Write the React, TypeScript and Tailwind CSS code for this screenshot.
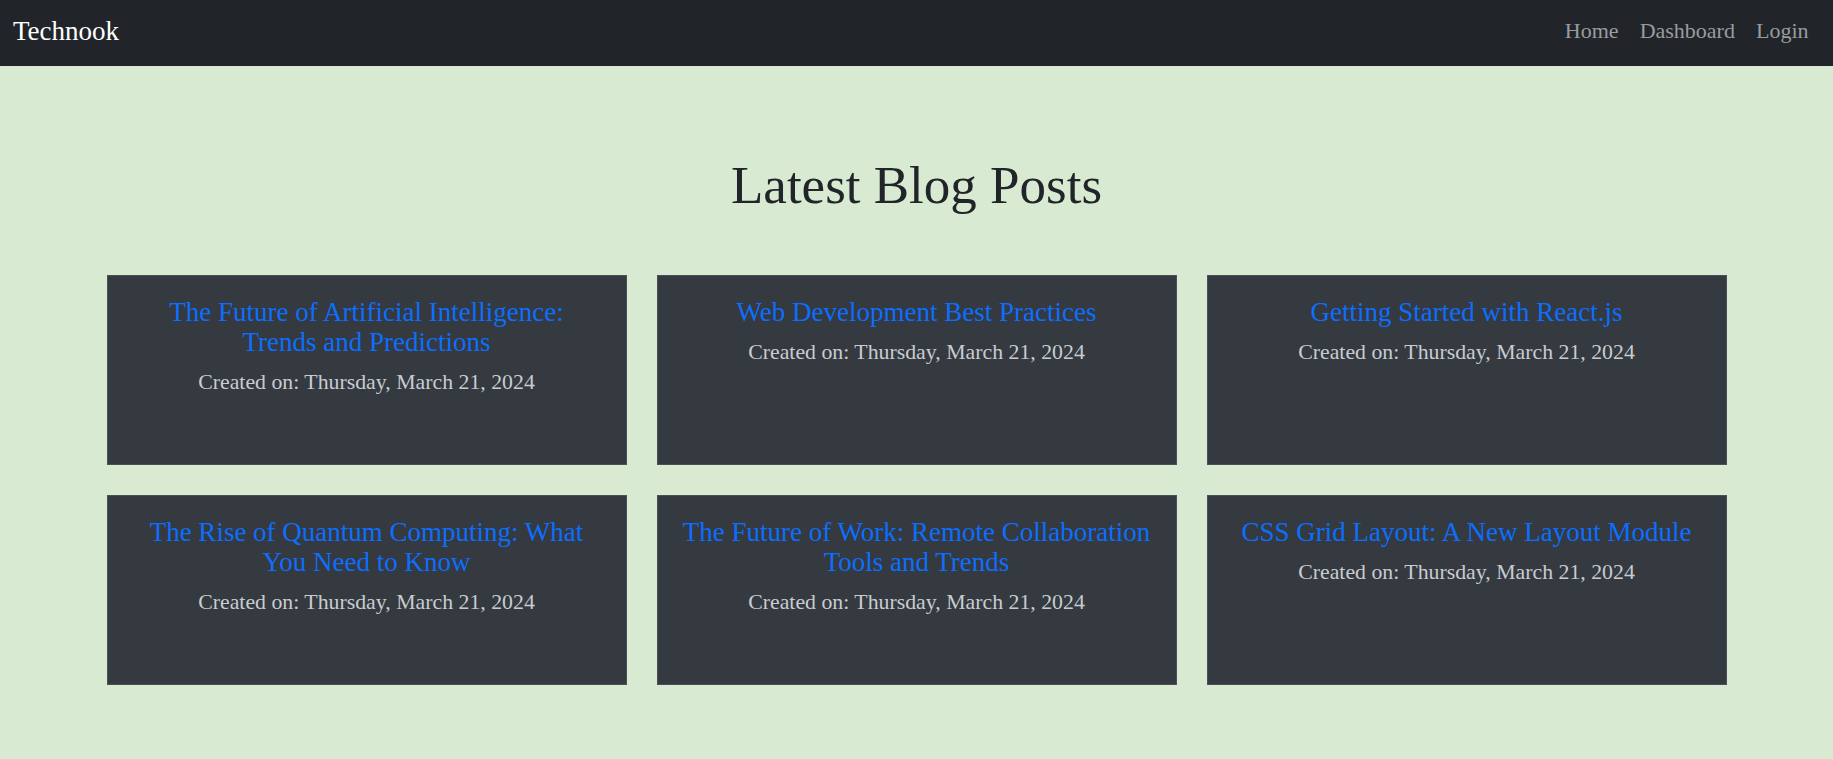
import React from "react";

interface Post {
  title: string;
  created: string;
}

const posts: Post[] = [
  { title: "The Future of Artificial Intelligence: Trends and Predictions", created: "Thursday, March 21, 2024" },
  { title: "Web Development Best Practices", created: "Thursday, March 21, 2024" },
  { title: "Getting Started with React.js", created: "Thursday, March 21, 2024" },
  { title: "The Rise of Quantum Computing: What You Need to Know", created: "Thursday, March 21, 2024" },
  { title: "The Future of Work: Remote Collaboration Tools and Trends", created: "Thursday, March 21, 2024" },
  { title: "CSS Grid Layout: A New Layout Module", created: "Thursday, March 21, 2024" },
];

const serif = "font-['Liberation_Serif','Times_New_Roman',serif]";

const Navbar: React.FC = () => (
  <nav className="h-[66px] bg-[#212529] flex items-center justify-between pl-[13px] pr-[14px] pb-[4px]">
    <a href="#" className="text-white text-[27px] leading-none">
      Technook
    </a>
    <ul className="flex items-center text-[22px] leading-none text-[#999c9f]">
      <li>
        <a href="#" className="px-[10.5px] hover:text-white">Home</a>
      </li>
      <li>
        <a href="#" className="px-[10.5px] hover:text-white">Dashboard</a>
      </li>
      <li>
        <a href="#" className="px-[10.5px] hover:text-white">Login</a>
      </li>
    </ul>
  </nav>
);

const PostCard: React.FC<{ post: Post }> = ({ post }) => (
  <div className="h-[190px] bg-[#343a40] border border-[#4a5057] px-6 pt-[21px] text-center">
    <h4 className="text-[27px] leading-[30px] mb-[9px]">
      <a href="#" className="text-[#0d6efd]">{post.title}</a>
    </h4>
    <p className="text-[21.8px] leading-[32px] text-[#c8ccd0]">
      Created on: {post.created}
    </p>
  </div>
);

export default function App() {
  return (
    <div className={`min-h-screen bg-[#d8ead2] ${serif}`}>
      <Navbar />
      <main className="pt-[88px] pb-10">
        <h1 className="text-center text-[53px] leading-[1.2] text-[#212529] mb-[57px]">
          Latest Blog Posts
        </h1>
        <div className="w-[1620px] mx-auto grid grid-cols-3 gap-[30px]">
          {posts.map((post) => (
            <PostCard key={post.title} post={post} />
          ))}
        </div>
      </main>
    </div>
  );
}
